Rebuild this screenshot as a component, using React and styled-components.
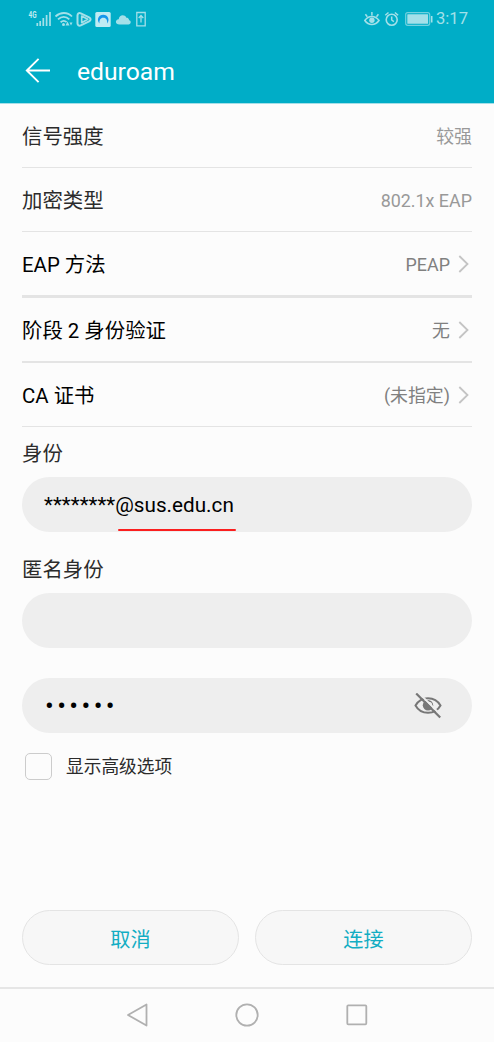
import { useState } from "react";
import styled, { createGlobalStyle } from "styled-components";

const GlobalStyle = createGlobalStyle`
  * {
    box-sizing: border-box;
  }
  body {
    margin: 0;
    background-color: #fcfcfc;
    font-family: Roboto, "Noto Sans CJK SC", sans-serif;
  }
`;

const Screen = styled.div`
  width: 100%;
  height: 1042px;
  display: flex;
  flex-direction: column;
  background-color: #fcfcfc;
`;

const Top = styled.header`
  height: 104px;
  background-color: #00adc7;
  border-bottom: 1px solid #a5dfe8;
`;

const StatusBar = styled.div`
  height: 38px;
  padding: 0 26px 0 28px;
  display: flex;
  align-items: center;
  justify-content: space-between;
  color: #a3e0e9;
`;

const StatusGroup = styled.div`
  display: flex;
  align-items: center;
`;

const Time = styled.span`
  margin-left: 3px;
  font-size: 16.6px;
  line-height: 20px;
`;

const TitleBar = styled.div`
  height: 65px;
  padding-left: 25px;
  display: flex;
  align-items: center;
`;

const Title = styled.h1`
  margin: 2px 0 0 26px;
  font-size: 24.7px;
  font-weight: 400;
  line-height: 32px;
  color: #fff;
`;

const Content = styled.main`
  flex: 1;
  padding: 0 22px;
  display: flex;
  flex-direction: column;
`;

const Row = styled.div`
  height: ${(props) => props.height || 64}px;
  padding-top: 2px;
  display: flex;
  align-items: center;
  justify-content: space-between;
  border-bottom: ${(props) => props.line || 1}px solid #e4e4e4;
`;

const Label = styled.span`
  font-size: 20.4px;
  line-height: 30px;
  color: ${(props) => (props.active ? "#000" : "#2b2b2b")};
`;

const Value = styled.span`
  display: flex;
  align-items: center;
  font-size: 17.9px;
  line-height: 26px;
  color: ${(props) => (props.active ? "#808080" : "#999")};
`;

const Field = styled.div`
  display: flex;
  flex-direction: column;
  padding-top: ${(props) => props.top}px;
`;

const FieldLabel = styled(Label)`
  height: 30px;
  margin-bottom: 8px;
`;

const Input = styled.div`
  position: relative;
  height: 55px;
  padding: 0 30px 0 22px;
  display: flex;
  align-items: center;
  justify-content: space-between;
  border-radius: 28px;
  background-color: #eee;
  font-size: 20.7px;
  color: #000;
`;

const Underline = styled.span`
  position: absolute;
  left: 96px;
  bottom: 1px;
  width: 118px;
  height: 2px;
  border-radius: 1px;
  background-color: #fb1f1f;
`;

const Dots = styled.span`
  padding-left: 1px;
  font-size: 26px;
  letter-spacing: 3.4px;
`;

const CheckRow = styled.div`
  margin-top: 20px;
  padding-left: 3px;
  display: flex;
  align-items: center;
  font-size: 17.7px;
  line-height: 26px;
  color: #2b2b2b;
`;

const Checkbox = styled.span`
  width: 27px;
  height: 27px;
  margin-right: 14px;
  border: 1.5px solid #ccc;
  border-radius: 5px;
`;

const CheckLabel = styled.span`
  padding-top: 1px;
`;

const Buttons = styled.div`
  margin-top: auto;
  margin-bottom: 22px;
  display: flex;
  gap: 16px;
`;

const Button = styled.button`
  flex: 1;
  height: 55px;
  padding: 1px 0 0;
  border: 1px solid #e4e4e4;
  border-radius: 28px;
  background-color: #f7f7f7;
  font-family: inherit;
  font-size: 20.2px;
  color: #12adc3;
`;

const NavBar = styled.nav`
  height: 55px;
  padding-bottom: 2px;
  display: flex;
  justify-content: center;
  align-items: center;
  gap: 84px;
  border-top: 2px solid #e6e6e6;
`;

const SignalIcons = () => (
  <svg width="120" height="20" viewBox="28 9 120 20" fill="none">
    <text x="28.5" y="18" fontSize="9" fontWeight="700" textLength="8" lengthAdjust="spacingAndGlyphs" fill="#c4ecf2">
      4G
    </text>
    <path d="M37.3 23v3M40.2 21v5M43.3 18v8M46.6 15v11M50 12v14" stroke="#a3e0e9" strokeWidth="1.7" />
    <g stroke="#a3e0e9" strokeWidth="1.8">
      <path d="M55.5 16.5c5-4.7 12-4.7 16.500 0M58 19.400c3.500-3.200 8-3.200 11.300 0M60.600 22.200c2-1.700 4.300-1.700 6 0" />
    </g>
    <circle cx="63.5" cy="24.6" r="1.5" fill="#a3e0e9" />
    <path d="m67.5 21.5 2 4h-4zM71 25.5l-1.5-3h3z" fill="#a3e0e9" />
    <path
      d="M77.500 15.500c0-2 1.500-3 3.300-2.200l8.300 4c2 1 2 3 0 4l-8.300 4c-1.800.9-3.300-.1-3.300-1.800z"
      stroke="#a3e0e9"
      strokeWidth="2"
    />
    <path d="M81.700 16l6 3.300-6 3.400z" stroke="#a3e0e9" strokeWidth="1.600" strokeLinejoin="round" />
    <rect x="95.300" y="12" width="15.400" height="15" rx="1.500" fill="#bfebf3" />
    <path
      d="M99.500 23.500c-3.300-4-.9-8.800 3.700-8.800 4.700 0 7 5 4 8.700.2-4-1.500-5.600-4-5.600-2.600 0-4.100 2.300-3.700 5.700z"
      fill="#1597ec"
    />
    <path d="M119.500 24.500c-4.600 0-4.600-5-.8-5.300.5-4.700 6-5.200 7.700-1.500 2.500 0 2.700 2.200 2.700 2.600 2.500.5 2 4.200-.6 4.200z" fill="#a3e0e9" />
    <path d="M136.800 12.500h8.400v13.300h-8.400z" stroke="#a3e0e9" strokeWidth="1.300" />
    <path d="M141 22.500v-6.500M138.700 18l2.300-2.500 2.300 2.500" stroke="#a3e0e9" strokeWidth="1.300" />
  </svg>
);

const SystemIcons = () => (
  <svg width="69" height="20" viewBox="364 9 69 20" fill="none" stroke="#a3e0e9">
    <path d="M364.800 20.500c3.800-5.300 10.300-5.300 14.200 0-3.900 5.300-10.400 5.300-14.200 0z" strokeWidth="1.600" />
    <path d="M371.900 15.500V12M367.300 16.800l-1.900-2.600M376.500 16.800l1.900-2.600" strokeWidth="1.500" />
    <circle cx="371.900" cy="20.300" r="2.700" fill="#a3e0e9" stroke="none" />
    <circle cx="391.700" cy="19.700" r="5.500" strokeWidth="1.600" />
    <path d="M391.700 16.500v3.500l2.200 1.700M385.300 15.300l3.200-2.800M398.100 15.300l-3.200-2.800" strokeWidth="1.500" />
    <rect x="405.700" y="12.700" width="24" height="12.600" rx="2" strokeWidth="1.200" strokeOpacity="0.700" />
    <rect x="407.300" y="14.300" width="20.800" height="9.400" rx="0.500" fill="#a3e0e9" stroke="none" />
    <path d="M431.700 16v6.500" strokeWidth="1.600" />
  </svg>
);

const BackArrow = () => (
  <svg width="26" height="26" viewBox="0 0 26 26" fill="none" stroke="#fff" strokeWidth="1.9">
    <path d="M25 12.500H1.500M13.600.8 1.800 12.500 13.600 24.200" />
  </svg>
);

const ChevronSvg = styled.svg`
  margin-left: 8px;
`;

const Chevron = () => (
  <ChevronSvg width="14" height="20" viewBox="0 0 14 20" fill="none" stroke="#c4c4c4" strokeWidth="1.8">
    <path d="M1.300 1 9.500 9 1.300 17" />
  </ChevronSvg>
);

const EyeOff = () => (
  <svg width="28" height="26" viewBox="0 0 28 26" fill="none">
    <path d="M1.500 12.500C7 2.700 21 2.700 26.500 12.500 21 22.300 7 22.300 1.500 12.500z" stroke="#777" strokeWidth="2" />
    <circle cx="14" cy="12.300" r="5.200" fill="#777" />
    <path d="M14.500 9.500c2 0 3 1.200 3.100 2.700" stroke="#eee" strokeWidth="1.300" />
    <path d="M4.200-.6 28 23.200" stroke="#eee" strokeWidth="2" />
    <path d="M2.200.5 26.200 24.500" stroke="#777" strokeWidth="2.200" />
  </svg>
);

const NavIcon = ({ children }) => (
  <svg width="26" height="26" viewBox="0 0 26 26" fill="none" stroke="#b0b0b0" strokeWidth="1.8" strokeLinejoin="round">
    {children}
  </svg>
);

const rows = [
  { label: "信号强度", value: "较强" },
  { label: "加密类型", value: "802.1x EAP" },
  { label: "EAP 方法", value: "PEAP", active: true, height: 66, line: 3 },
  { label: "阶段 2 身份验证", value: "无", active: true, height: 65, line: 2 },
  { label: "CA 证书", value: "(未指定)", active: true },
];

export default function App() {
  const [advanced, setAdvanced] = useState(false);

  return (
    <Screen>
      <GlobalStyle />
      <Top>
        <StatusBar>
          <StatusGroup>
            <SignalIcons />
          </StatusGroup>
          <StatusGroup>
            <SystemIcons />
            <Time>3:17</Time>
          </StatusGroup>
        </StatusBar>
        <TitleBar>
          <BackArrow />
          <Title>eduroam</Title>
        </TitleBar>
      </Top>
      <Content>
        {rows.map((row) => (
          <Row key={row.label} height={row.height} line={row.line}>
            <Label active={row.active}>{row.label}</Label>
            <Value active={row.active}>
              {row.value}
              {row.active && <Chevron />}
            </Value>
          </Row>
        ))}
        <Field top={12}>
          <FieldLabel>身份</FieldLabel>
          <Input>
            ********@sus.edu.cn
            <Underline />
          </Input>
        </Field>
        <Field top={23}>
          <FieldLabel>匿名身份</FieldLabel>
          <Input />
        </Field>
        <Field top={30}>
          <Input>
            <Dots>••••••</Dots>
            <EyeOff />
          </Input>
        </Field>
        <CheckRow onClick={() => setAdvanced(!advanced)}>
          <Checkbox />
          <CheckLabel>显示高级选项</CheckLabel>
        </CheckRow>
        <Buttons>
          <Button>取消</Button>
          <Button>连接</Button>
        </Buttons>
      </Content>
      <NavBar>
        <NavIcon>
          <path d="M22.5 2.500v21L4 13z" />
        </NavIcon>
        <NavIcon>
          <circle cx="13" cy="13" r="10.7" />
        </NavIcon>
        <NavIcon>
          <rect x="3.3" y="3.3" width="19" height="19" rx="1" />
        </NavIcon>
      </NavBar>
    </Screen>
  );
}
